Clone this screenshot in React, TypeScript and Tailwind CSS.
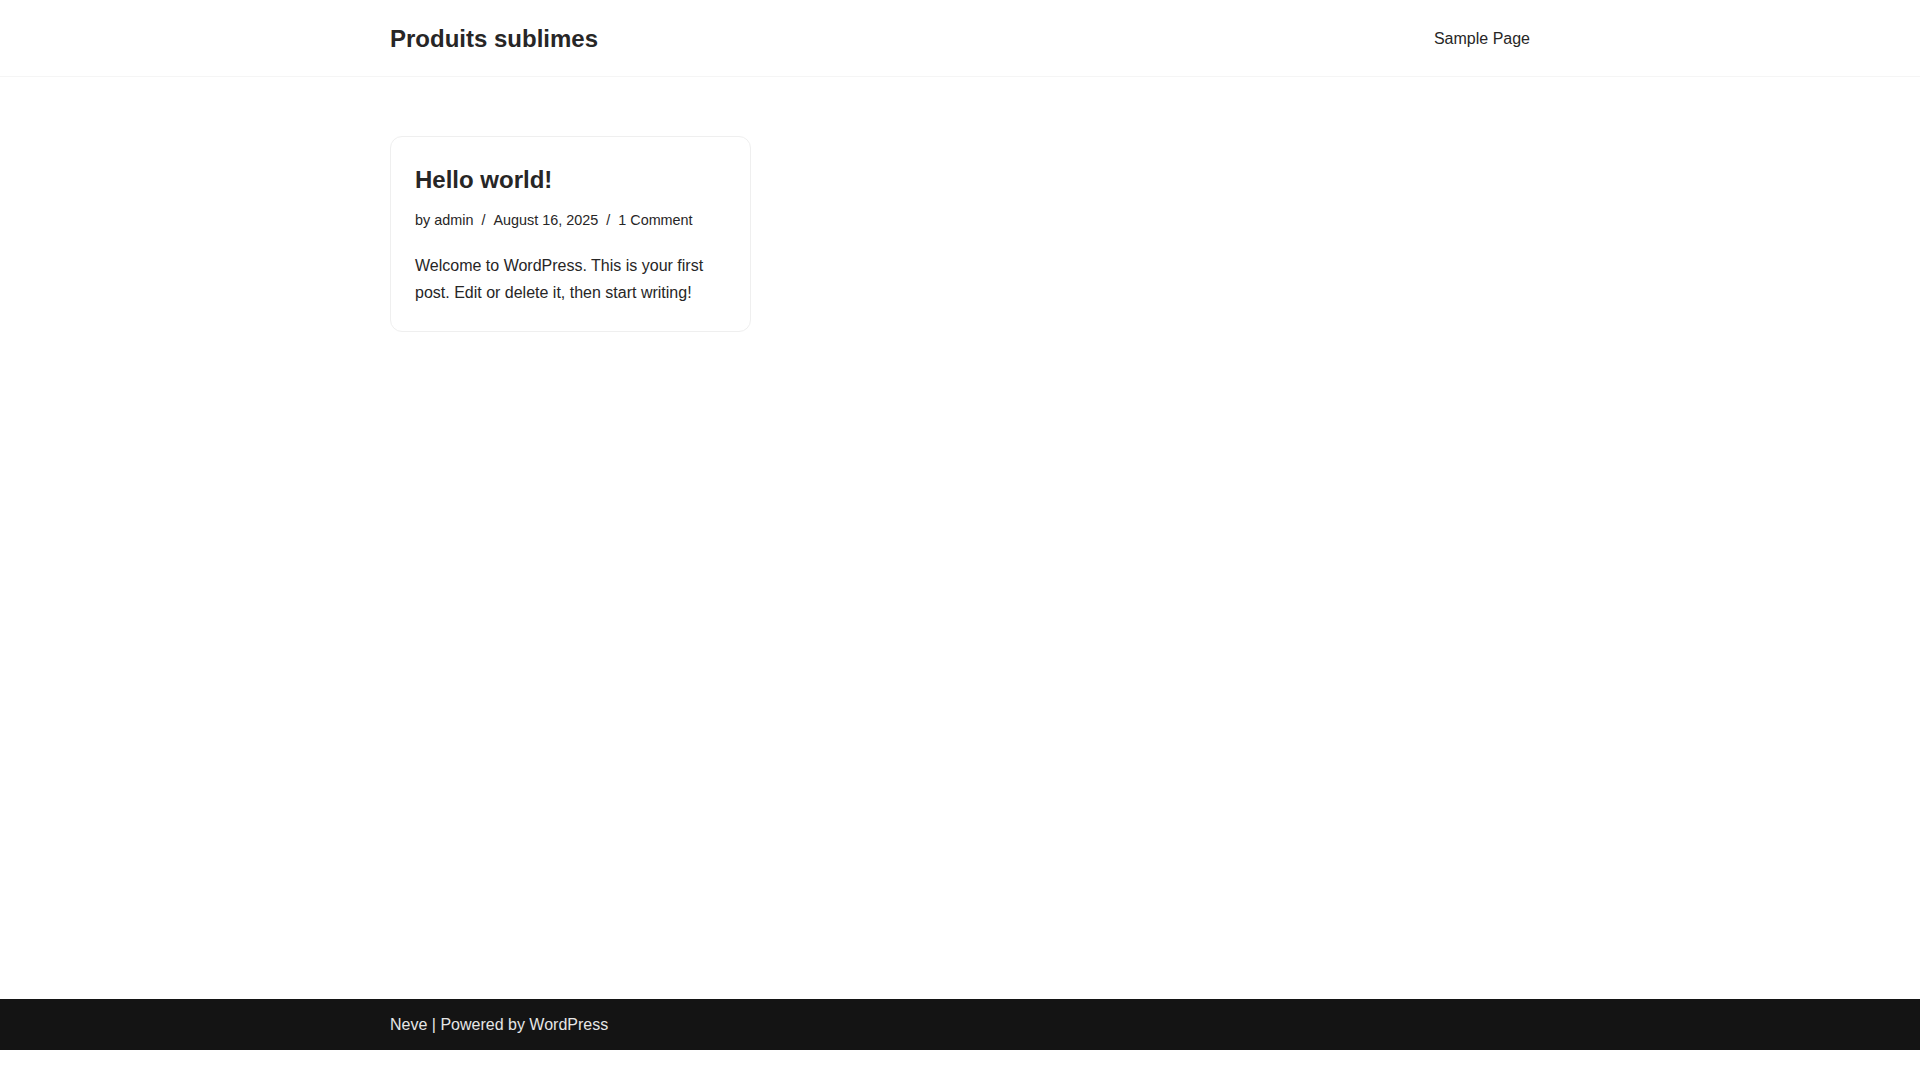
import React from "react";

export default function App() {
  return (
    <div
      className="bg-white text-[#272626]"
      style={{ fontFamily: '"Liberation Sans", Arial, sans-serif' }}
    >
      <header className="border-b border-[#f5f5f5]">
        <div className="mx-auto flex h-[76px] w-[1140px] items-center justify-between">
          <div className="text-[24px] font-bold leading-[31px] text-[#272626]">
            Produits sublimes
          </div>
          <nav className="mt-[2px] text-[16px] leading-[26px] text-[#272626]">
            Sample Page
          </nav>
        </div>
      </header>

      <main className="min-h-[922px] pt-[59px]">
        <div className="mx-auto grid w-[1140px] grid-cols-3 gap-[28px]">
          <article className="rounded-[12px] border border-[#efefef] px-[24px] pt-[27px] pb-[25px]">
            <h2 className="text-[24px] font-bold leading-[31px] text-[#272626]">
              Hello world!
            </h2>
            <div className="mt-[14px] flex items-center text-[14.4px] leading-[22px] text-[#272626]">
              <span>by admin</span>
              <span className="mx-[8px]">/</span>
              <span>August 16, 2025</span>
              <span className="mx-[8px]">/</span>
              <span>1 Comment</span>
            </div>
            <p className="mt-[21px] text-[16px] leading-[27px] text-[#272626]">
              Welcome to WordPress. This is your first post. Edit or delete it,
              then start writing!
            </p>
          </article>
        </div>
      </main>

      <footer className="bg-[#141414] py-[13px]">
        <div className="mx-auto w-[1140px] text-[16px] leading-[25px] text-[#e6e6e6]">
          <span>Neve</span> | Powered by <span>WordPress</span>
        </div>
      </footer>
    </div>
  );
}
